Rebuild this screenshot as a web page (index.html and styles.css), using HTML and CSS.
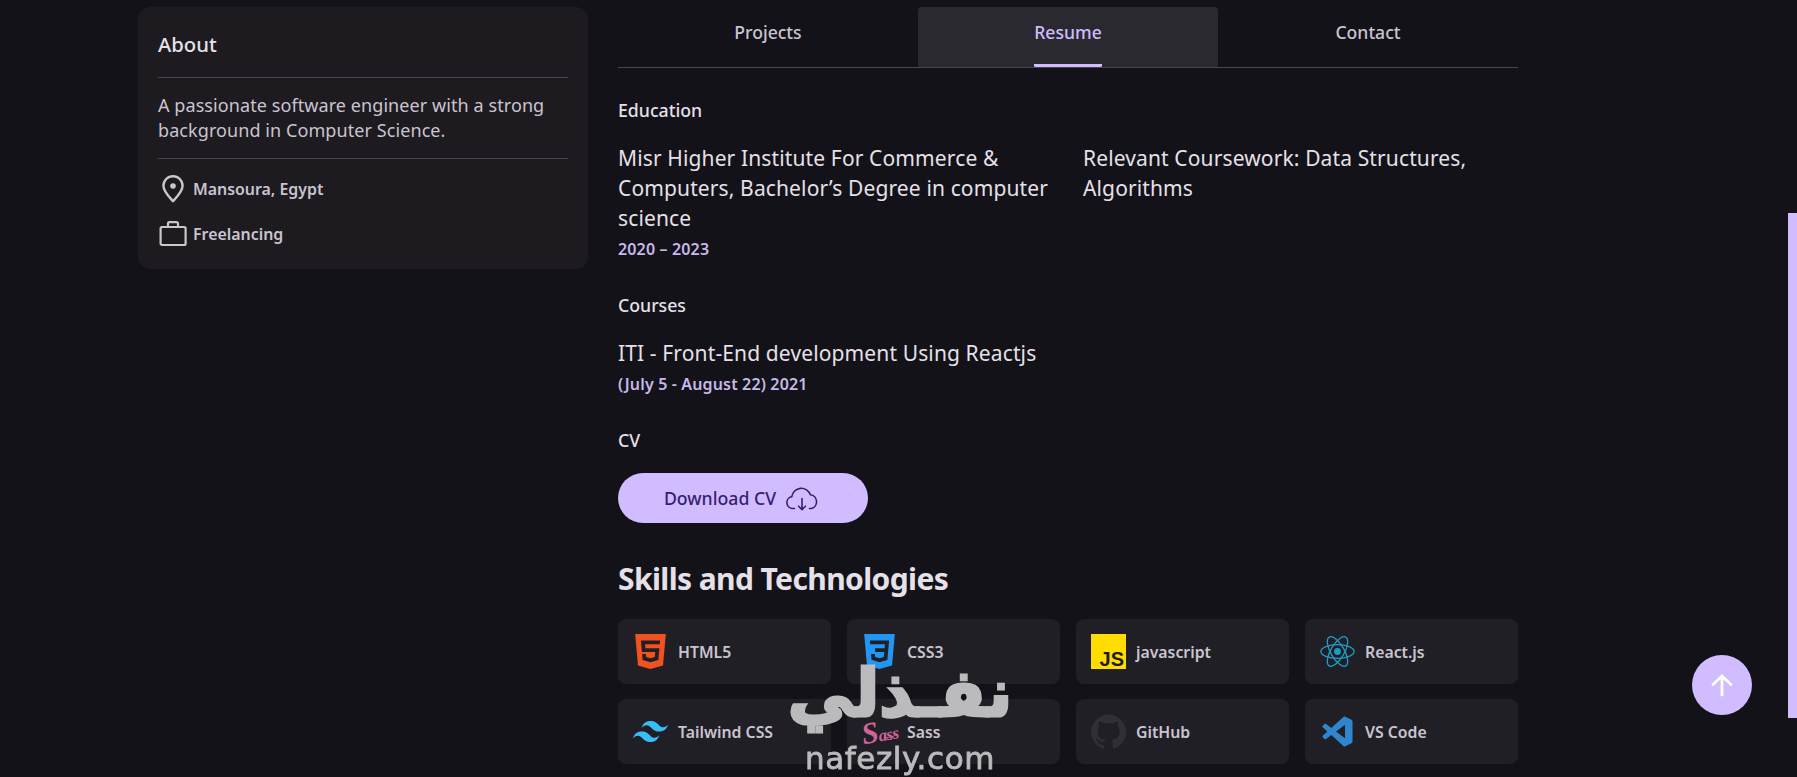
FILE: index.html
```html
<!DOCTYPE html>
<html lang="en">
  <head>
    <meta charset="UTF-8" />
    <meta name="viewport" content="width=device-width, initial-scale=1.0" />
    <title>Portfolio</title>
    <link rel="stylesheet" href="styles.css">
  </head>
  <body>
    <div class="page">
      <aside class="about-card">
        <h2 class="about-title">About</h2>
        <p class="about-text">A passionate software engineer with a strong background in Computer Science.</p>
        <div class="about-meta">
          <div class="meta-row">
            <svg class="meta-icon" viewBox="0 0 30 30" fill="none" stroke="#c9c7cc" stroke-width="2.4" stroke-linejoin="round">
              <path d="M15 27.2C11 22.8 5.4 17.5 5.4 11.8a9.6 9.6 0 0 1 19.2 0C24.6 17.5 19 22.8 15 27.2z" />
              <circle cx="15" cy="12" r="2.8" fill="#c9c7cc" stroke="none" />
            </svg>
            <span>Mansoura, Egypt</span>
          </div>
          <div class="meta-row">
            <svg class="meta-icon" viewBox="0 0 30 30" fill="none" stroke="#c9c7cc" stroke-width="2.2" stroke-linejoin="round">
              <rect x="2.6" y="8" width="25" height="18" rx="1.5" />
              <path d="M10 8V4.6a1.4 1.4 0 0 1 1.4-1.4h7.2A1.4 1.4 0 0 1 20 4.6V8" />
            </svg>
            <span>Freelancing</span>
          </div>
        </div>
      </aside>

      <main class="main">
        <nav class="tabs">
          <a class="tab">Projects</a>
          <a class="tab tab-active"><span class="tab-label">Resume</span></a>
          <a class="tab">Contact</a>
        </nav>

        <h3 class="label label-education">Education</h3>
        <div class="edu-grid">
          <div>
            <p class="item-title">Misr Higher Institute For Commerce &amp; Computers, Bachelor’s Degree in computer science</p>
            <p class="item-date">2020 – 2023</p>
          </div>
          <p class="item-title">Relevant Coursework: Data Structures, Algorithms</p>
        </div>

        <h3 class="label label-courses">Courses</h3>
        <p class="item-title item-course">ITI - Front-End development Using Reactjs</p>
        <p class="item-date">(July 5 - August 22) 2021</p>

        <h3 class="label label-cv">CV</h3>
        <a class="download-btn">
          Download CV
          <svg class="cloud-icon" viewBox="0 0 32 26" fill="none" stroke="#381e72" stroke-width="1.6" stroke-linecap="round" stroke-linejoin="round">
            <path d="M8.5 23.5H7A6 6 0 0 1 5.8 11.6 9.6 9.6 0 0 1 24.4 9.8a7 7 0 0 1 1 13.7H23.5" />
            <path d="M16 13.5v11M12.6 21.2 16 24.6l3.4-3.4" />
          </svg>
        </a>

        <h2 class="skills-title">Skills and Technologies</h2>
        <div class="skills-grid">
          <div class="skill">
            <svg class="skill-icon" viewBox="0 0 24 24"><path fill="#f1521f" d="M1.5 0h21l-1.91 21.563L11.977 24l-8.564-2.438L1.5 0zm7.031 9.75l-.232-2.718 10.059.003.23-2.622L5.412 4.41l.698 8.01h9.126l-.326 3.426-2.91.804-2.955-.81-.188-2.11H6.248l.33 4.171L12 19.351l5.379-1.443.744-8.157H8.531z" /></svg>
            <span>HTML5</span>
          </div>
          <div class="skill">
            <svg class="skill-icon" viewBox="0 0 24 24"><path fill="#2196f3" d="M1.5 0h21l-1.91 21.563L11.977 24l-8.564-2.438L1.5 0zm17.09 4.413L5.41 4.41l.213 2.622 10.125.002-.255 2.716h-6.64l.24 2.573h6.182l-.366 3.523-2.91.804-2.956-.81-.188-2.11h-2.61l.29 3.855L12 19.288l5.373-1.53L18.59 4.414z" /></svg>
            <span>CSS3</span>
          </div>
          <div class="skill">
            <svg class="skill-icon" viewBox="0 0 35 35">
              <rect width="35" height="35" fill="#ffdd00" />
              <text class="js-text" x="33" y="32" text-anchor="end">JS</text>
            </svg>
            <span>javascript</span>
          </div>
          <div class="skill">
            <svg class="skill-icon" viewBox="0 0 35 35" fill="none" stroke="#1f9cc2" stroke-width="1.3">
              <ellipse cx="17.5" cy="17.5" rx="16.6" ry="6.8" />
              <ellipse cx="17.5" cy="17.5" rx="16.6" ry="6.8" transform="rotate(60 17.5 17.5)" />
              <ellipse cx="17.5" cy="17.5" rx="16.6" ry="6.8" transform="rotate(120 17.5 17.5)" />
              <circle cx="17.5" cy="17.5" r="3.4" fill="#1f9cc2" stroke="none" />
            </svg>
            <span>React.js</span>
          </div>
          <div class="skill">
            <svg class="skill-icon" viewBox="0 0 24 24"><path fill="#38bdf8" d="M12.001,4.8c-3.2,0-5.2,1.6-6,4.8c1.2-1.6,2.6-2.2,4.2-1.8c0.913,0.228,1.565,0.89,2.288,1.624 C13.666,10.618,15.027,12,18.001,12c3.2,0,5.2-1.6,6-4.8c-1.2,1.6-2.6,2.2-4.2,1.8c-0.913-0.228-1.565-0.89-2.288-1.624 C16.337,6.182,14.976,4.8,12.001,4.8z M6.001,12c-3.2,0-5.2,1.6-6,4.8c1.2-1.6,2.6-2.2,4.2-1.8c0.913,0.228,1.565,0.89,2.288,1.624 c1.177,1.194,2.538,2.576,5.512,2.576c3.2,0,5.2-1.6,6-4.8c-1.2,1.6-2.6,2.2-4.2,1.8c-0.913-0.228-1.565-0.89-2.288-1.624 C10.337,13.382,8.976,12,6.001,12z" /></svg>
            <span>Tailwind CSS</span>
          </div>
          <div class="skill">
            <svg class="skill-icon sass-icon" viewBox="0 0 35 35" fill="none">
              <text class="sass-text" x="0" y="28" transform="rotate(-10 14 20)"><tspan class="sass-cap">S</tspan>ass</text>
              <path d="M22 23c4 1 8 .6 13-3" stroke="#cf649a" stroke-width="0.9" />
            </svg>
            <span>Sass</span>
          </div>
          <div class="skill">
            <svg class="skill-icon" viewBox="0 0 24 24"><path fill="#302f34" d="M12 .297c-6.63 0-12 5.373-12 12 0 5.303 3.438 9.8 8.205 11.385.6.113.82-.258.82-.577 0-.285-.01-1.04-.015-2.04-3.338.724-4.042-1.61-4.042-1.61C4.422 18.07 3.633 17.7 3.633 17.7c-1.087-.744.084-.729.084-.729 1.205.084 1.838 1.236 1.838 1.236 1.07 1.835 2.809 1.305 3.495.998.108-.776.417-1.305.76-1.605-2.665-.3-5.466-1.332-5.466-5.93 0-1.31.465-2.38 1.235-3.22-.135-.303-.54-1.523.105-3.176 0 0 1.005-.322 3.3 1.23.96-.267 1.98-.399 3-.405 1.02.006 2.04.138 3 .405 2.28-1.552 3.285-1.23 3.285-1.23.645 1.653.24 2.873.12 3.176.765.84 1.23 1.91 1.23 3.22 0 4.61-2.805 5.625-5.475 5.92.42.36.81 1.096.81 2.22 0 1.606-.015 2.896-.015 3.286 0 .315.21.69.825.57C20.565 22.092 24 17.592 24 12.297c0-6.627-5.373-12-12-12" /></svg>
            <span>GitHub</span>
          </div>
          <div class="skill">
            <svg class="skill-icon" viewBox="-2 -2 28 28"><path fill="#2f86cf" d="M23.15 2.587L18.21.21a1.494 1.494 0 0 0-1.705.29l-9.46 8.63-4.12-3.128a.999.999 0 0 0-1.276.057L.327 7.261A1 1 0 0 0 .326 8.74L3.899 12 .326 15.26a1 1 0 0 0 .001 1.479L1.65 17.94a.999.999 0 0 0 1.276.057l4.12-3.128 9.46 8.63a1.492 1.492 0 0 0 1.704.29l4.942-2.377A1.5 1.5 0 0 0 24 20.06V3.939a1.5 1.5 0 0 0-.85-1.352zm-5.146 14.861L10.826 12l7.178-5.448v10.896z" /></svg>
            <span>VS Code</span>
          </div>
        </div>
      </main>
    </div>

    <div class="scroll-thumb"></div>
    <a class="to-top">
      <svg viewBox="0 0 24 24" fill="none" stroke="#fff" stroke-width="2.8" stroke-linecap="round" stroke-linejoin="round">
        <path d="M12 22V3M3 11.5 12 3l9 8.5" />
      </svg>
    </a>
    <div class="watermark">
      <span class="watermark-ar" lang="ar" dir="rtl">نفـذلي</span>
      <span class="watermark-en">nafezly.com</span>
    </div>
  </body>
</html>
```

FILE: styles.css
```css
* {
  margin: 0;
  padding: 0;
  box-sizing: border-box;
}

html,
body {
  height: 100%;
  overflow: hidden;
}

body {
  background-color: #131218;
  color: #e6e0e9;
  font-family: 'Noto Sans', sans-serif;
}

.page {
  display: flex;
  align-items: flex-start;
  gap: 30px;
  padding: 7px 0 0 138px;
}

.about-card {
  width: 450px;
  flex-shrink: 0;
  padding: 19px 20px 20px;
  border-radius: 12px;
  background-color: #1d1b20;
}

.about-title {
  font-size: 20.3px;
  font-weight: 500;
  line-height: 36px;
  padding-bottom: 15px;
  border-bottom: 1px solid #49454f;
}

.about-text {
  font-size: 18px;
  line-height: 25px;
  letter-spacing: 0.08px;
  color: #cac4d0;
  padding: 15px 0;
  border-bottom: 1px solid #49454f;
}

.about-meta {
  display: flex;
  flex-direction: column;
  gap: 15px;
  padding-top: 15px;
}

.meta-row {
  display: flex;
  align-items: center;
  gap: 5px;
  height: 30px;
  font-size: 15.9px;
  font-weight: 600;
  color: #cac4d0;
}

.meta-icon {
  width: 30px;
  height: 30px;
}

.main {
  width: 900px;
  flex-shrink: 0;
}

.tabs {
  display: flex;
  height: 61px;
  border-bottom: 1px solid #49454f;
}

.tab {
  flex: 1;
  display: flex;
  justify-content: center;
  font-size: 17.6px;
  font-weight: 500;
  line-height: 51px;
  color: #cac4d0;
}

.tab-active {
  background-color: #2b2930;
  border-radius: 4px 4px 0 0;
  color: #d0bcff;
}

.tab-label {
  display: block;
  height: 60px;
  border-bottom: 3px solid #d0bcff;
  border-radius: 0 0 1px 1px;
}

.label {
  font-size: 17.7px;
  font-weight: 500;
  line-height: 24px;
  color: #e6e0e9;
}

.label-education {
  margin-top: 30px;
}

.label-courses {
  margin-top: 33px;
}

.label-cv {
  margin-top: 33px;
}

.edu-grid {
  display: grid;
  grid-template-columns: 1fr 1fr;
  gap: 30px;
  margin-top: 21px;
}

.item-title {
  font-size: 21px;
  line-height: 30px;
  letter-spacing: 0.125px;
  color: #e6e0e9;
}

.item-course {
  margin-top: 21px;
}

.item-date {
  margin-top: 5px;
  font-size: 16px;
  font-weight: 600;
  line-height: 22px;
  letter-spacing: 0.15px;
  color: #c8b8ec;
}

.download-btn {
  display: flex;
  align-items: center;
  justify-content: center;
  gap: 10px;
  width: 250px;
  height: 50px;
  margin-top: 21px;
  padding-right: 4px;
  border-radius: 25px;
  background-color: #d0bcff;
  color: #381e72;
  font-size: 17.7px;
  font-weight: 500;
}

.cloud-icon {
  width: 32px;
  height: 26px;
}

.skills-title {
  margin-top: 34px;
  font-size: 30px;
  font-weight: 700;
  line-height: 44px;
  letter-spacing: -0.6px;
  color: #e6e0e9;
}

.skills-grid {
  display: grid;
  grid-template-columns: repeat(4, 1fr);
  gap: 15px 16px;
  margin-top: 18px;
}

.skill {
  display: flex;
  align-items: center;
  gap: 10px;
  height: 65px;
  padding: 0 15px;
  border-radius: 8px;
  background-color: #211f26;
  font-size: 15.8px;
  font-weight: 600;
  color: #cac4d0;
}

.skill span {
  padding-top: 1px;
}

.skill-icon {
  width: 35px;
  height: 35px;
  flex-shrink: 0;
}

.sass-icon {
  overflow: visible;
}

.js-text {
  font-family: 'Liberation Sans', sans-serif;
  font-size: 20px;
  font-weight: 700;
  fill: #1d1b20;
}

.sass-text {
  font-family: 'Liberation Serif', serif;
  font-style: italic;
  font-size: 17px;
  letter-spacing: -0.6px;
  fill: #cf649a;
}

.sass-cap {
  font-size: 30px;
}

.scroll-thumb {
  position: fixed;
  top: 213px;
  right: 0;
  width: 9px;
  height: 505px;
  background-color: #d0bcff;
}

.to-top {
  position: fixed;
  top: 655px;
  left: 1692px;
  width: 60px;
  height: 60px;
  display: flex;
  align-items: center;
  justify-content: center;
  border-radius: 50%;
  background-color: #d0bcff;
}

.to-top svg {
  width: 24px;
  height: 24px;
}

.watermark {
  position: fixed;
  top: 646px;
  left: 740px;
  width: 320px;
  display: flex;
  flex-direction: column;
  align-items: center;
  color: #bbbabd;
  pointer-events: none;
}

.watermark-ar {
  font-family: 'DejaVu Sans', sans-serif;
  font-size: 66px;
  font-weight: 700;
  line-height: 96px;
  -webkit-text-stroke: 3px #bbbabd;
}

.watermark-en {
  font-family: 'DejaVu Sans', sans-serif;
  font-size: 31px;
  font-weight: 400;
  line-height: 36px;
  letter-spacing: 0.6px;
  margin-top: -2px;
  -webkit-text-stroke: 0.8px #bbbabd;
}
```
